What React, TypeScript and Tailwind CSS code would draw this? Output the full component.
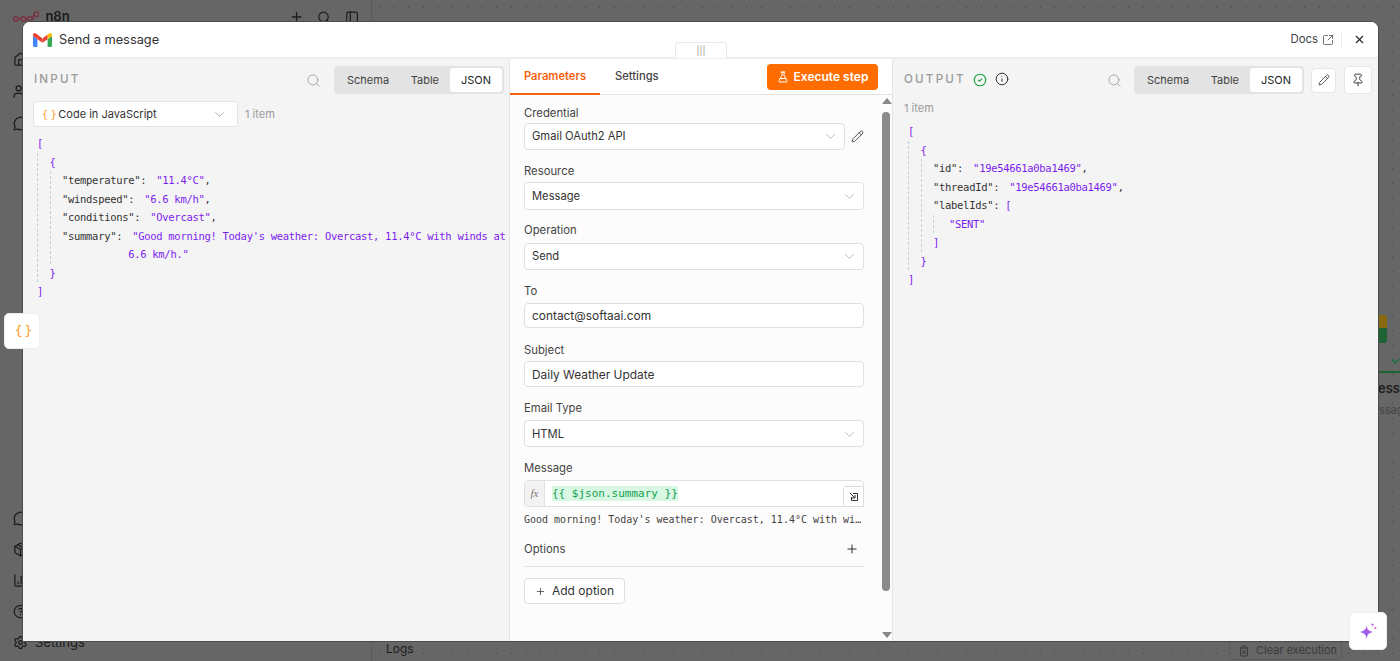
import React from "react";
import { Search, ChevronDown, Pencil, Pin, SquareArrowOutUpRight, X, Info, CircleCheck, FlaskConical, Plus, Home, Users, MessageCircle, PanelLeft, Settings, HelpCircle, BarChart3, Package, Trash2 } from "lucide-react";

const MONO = "font-['DejaVu_Sans_Mono',monospace]";

function Seg() {
  return (
    <div className="flex h-[28px] w-[170px] items-center rounded-[4px] bg-[#e3e3e3] p-[2px] text-[11px] text-[#444]">
      <span className="flex-1 pl-[11px]">Schema</span>
      <span className="mr-[11px]">Table</span>
      <span className="flex h-[24px] w-[52px] items-center justify-center rounded-[3px] bg-white text-[#222]">JSON</span>
    </div>
  );
}

function Gmail() {
  return (
    <svg width="19" height="14" viewBox="0 0 19 14">
      <path d="M0 3 L0 12.6 Q0 14 1.4 14 L4.4 14 L4.4 6.2Z" fill="#4285f4" />
      <path d="M14.6 6.2 L14.6 14 L17.6 14 Q19 14 19 12.6 L19 3Z" fill="#34a853" />
      <path d="M0 3 L0 1.8 Q0.4 -0.6 3 0.4 L9.5 5.4 L9.5 9.8 L4.4 6.2Z" fill="#ea4335" />
      <path d="M9.5 5.4 L14.6 1.4 L14.6 6.2 L9.5 9.8Z" fill="#ea4335" />
      <path d="M14.6 1.4 L16 0.4 Q18.6 -0.6 19 1.8 L19 3 L14.6 6.2Z" fill="#fbbc04" />
    </svg>
  );
}

function Braces({ className }: { className: string }) {
  return <span className={"font-['DejaVu_Sans_Mono',monospace] whitespace-pre text-[#ff9b26] " + className}>{"{ }"}</span>;
}

function Line({ children }: { children: React.ReactNode }) {
  return <div className="h-[18.5px] whitespace-pre leading-[18.5px]">{children}</div>;
}
const K = ({ children }: { children: React.ReactNode }) => <span className="text-[#333]">{children}</span>;
const V = ({ children }: { children: React.ReactNode }) => <span className="text-[#7c1df0]">{children}</span>;
const Gap = () => <span className="inline-block w-[10px]" />;

function Nest({ children }: { children: React.ReactNode }) {
  return <div className="border-l border-dashed border-[#c5cfdc] pl-[11.5px]">{children}</div>;
}

function Label({ children, className }: { children: React.ReactNode; className: string }) {
  return <div className={"text-[11.3px] leading-[16px] text-[#444] " + className}>{children}</div>;
}

function Box({ children, chevron = true, className = "" }: { children: React.ReactNode; chevron?: boolean; className?: string }) {
  return (
    <div className={"flex items-center justify-between rounded-[4px] border border-[#e0e0e0] bg-white pl-[7px] pr-[6px] text-[#333] " + className}>
      <span>{children}</span>
      {chevron && <ChevronDown size={15} strokeWidth={1.3} className="text-[#aaa]" />}
    </div>
  );
}

export default function App() {
  return (
    <div className="relative flex h-[661px] w-[1400px] overflow-hidden bg-[#666666] font-['Inter',sans-serif] text-[#1c1c1c]">
      {/* Dimmed app behind the dialog */}
      <aside className="flex h-full w-[372px] shrink-0 flex-col border-r border-[#5a5a5a] pr-[12px] pl-[13px] pt-[10px]">
        <div className="flex h-[14px] items-center">
          <svg width="28" height="12" viewBox="0 0 28 12" fill="none" stroke="#7b2d3f" strokeWidth="1.4">
            <circle cx="3" cy="8" r="2.4" /><circle cx="11" cy="8" r="2.4" /><circle cx="18" cy="8" r="2.4" /><circle cx="25" cy="3" r="2.4" />
            <path d="M5.4 8h3.2M13.4 8h2.2M20.4 8c2 0 .6-5 2.2-5" />
          </svg>
          <span className="ml-[6px] text-[13px] font-semibold">n8n</span>
          <Plus size={16} className="ml-[219px]" />
          <Search size={15} className="ml-[13px]" />
          <PanelLeft size={15} className="ml-[14px]" />
        </div>
        <div className="mt-[28px] flex flex-col gap-[17px]">
          <Home size={15} />
          <Users size={15} />
          <MessageCircle size={15} />
        </div>
        <div className="mt-auto flex flex-col gap-[16px] pb-[9px]">
          <MessageCircle size={15} />
          <Package size={15} />
          <BarChart3 size={15} />
          <HelpCircle size={15} className="-mb-[2px]" />
          <div className="flex items-center gap-[7px] text-[13px]">
            <Settings size={15} />
            <span>Settings</span>
          </div>
        </div>
      </aside>
      <main className="relative h-full flex-1 bg-[radial-gradient(circle,#3f3f3f_0.6px,transparent_0.8px)] bg-[size:14.7px_14.7px]">
        <span className="absolute bottom-[3px] left-[14px] text-[12px]">Logs</span>
        <div className="absolute right-[58px] bottom-[1px] flex h-[19px] w-[113px] items-center gap-[6px] rounded-[3px] border border-[#5c5c5c] pl-[8px] text-[11px] text-[#3a3a3a]">
          <Trash2 size={12} />
          Clear execution
        </div>
        <div className="absolute top-[315px] left-[1007px] h-[28px] w-[8px] rounded-r-[3px] bg-[linear-gradient(to_bottom,#8a6a10_45%,#1e6334_45%)]" />
        <svg width="9" height="7" viewBox="0 0 9 7" fill="none" stroke="#16703a" strokeWidth="1.4" className="absolute top-[358px] left-[1019px]">
          <path d="M0.5 1 L4 5 L8.5 1" />
        </svg>
        <div className="absolute top-[371px] left-[1007px] h-[1.5px] w-[21px] bg-[#1e6334]" />
        <span className="absolute top-[379px] left-[1006px] text-[13px] font-semibold">ess</span>
        <span className="absolute top-[402px] left-[1007px] text-[11px] text-[#444]">ssag</span>
      </main>

      {/* Dialog */}
      <div className="absolute top-[21px] left-[22px] flex h-[621px] w-[1357px] flex-col overflow-hidden rounded-t-[8px] border border-[#4c4c4c] bg-white">
        <header className="flex h-[37px] shrink-0 items-center border-b-2 border-[#eeeeee] bg-white pr-[12px] pl-[10px]">
          <Gmail />
          <span className="ml-[7px] text-[12.8px] text-[#333]">Send a message</span>
          <span className="ml-auto text-[11.4px] text-[#444]">Docs</span>
          <SquareArrowOutUpRight size={12} strokeWidth={1.5} className="ml-[4px] text-[#444]" />
          <span className="mr-[11px] ml-[7px] h-[14px] w-px bg-[#eaeaea]" />
          <X size={13} strokeWidth={2} className="text-[#222]" />
        </header>
        <div className="flex min-h-0 flex-1">
          {/* Input */}
          <section className="w-[487px] shrink-0 border-r border-[#e5e5e5] bg-[#f4f4f4] pl-[11px]">
            <div className="flex h-[42px] items-center pr-[5px]">
              <span className="text-[11.6px] font-medium tracking-[2.2px] text-[#9a9a9a]">INPUT</span>
              <Search size={15} strokeWidth={1.3} className="mr-[13px] ml-auto text-[#9a9a9a]" />
              <Seg />
            </div>
            <div className="-ml-px flex items-center">
              <div className="flex h-[26px] w-[205px] items-center rounded-[4px] border border-[#e4e4e4] bg-white pr-[10px] pl-[8px] text-[11px] text-[#333]">
                <Braces className="mr-[3px] text-[10px] tracking-[-1.6px]" />
                Code in JavaScript
                <ChevronDown size={15} strokeWidth={1.2} className="ml-auto text-[#999]" />
              </div>
              <span className="ml-[7px] text-[11px] text-[#9a9a9a]">1 item</span>
            </div>
            <div className={"mt-[7px] ml-[3px] text-[10.5px] tracking-[-0.3px] " + MONO}>
              <Line><V>[</V></Line>
              <Nest>
                <Line><V>{"{"}</V></Line>
                <Nest>
                  <Line><K>"temperature":</K><Gap /><V>"11.4°C"</V><K>,</K></Line>
                  <Line><K>"windspeed":</K><Gap /><V>"6.6 km/h"</V><K>,</K></Line>
                  <Line><K>"conditions":</K><Gap /><V>"Overcast"</V><K>,</K></Line>
                  <Line><K>"summary":</K><Gap /><V>"Good morning! Today's weather: Overcast, 11.4°C with winds at</V></Line>
                  <Line><V>{"           6.6 km/h.\""}</V></Line>
                </Nest>
                <Line><V>{"}"}</V></Line>
              </Nest>
              <Line><V>]</V></Line>
            </div>
          </section>

          {/* Parameters */}
          <section className="flex w-[383px] shrink-0 flex-col border-r border-[#e5e5e5] bg-[#fcfcfc]">
            <div className="flex h-[36px] shrink-0 items-stretch border-b border-[#e3e3e3] bg-white pr-[14px]">
              <span className="-mb-px flex w-[90px] items-center border-b-2 border-[#f4600c] pl-[14px] text-[11.2px] font-semibold text-[#f4600c]">Parameters</span>
              <span className="ml-[15px] flex items-center text-[11.2px] font-medium text-[#444]">Settings</span>
              <div className="mt-[5px] ml-auto flex h-[26px] w-[111px] items-center justify-center gap-[5px] rounded-[4px] bg-[#ff6d00] text-[12px] font-semibold text-white">
                <FlaskConical size={12} strokeWidth={2} />
                Execute step
              </div>
            </div>
            <div className="flex min-h-0 flex-1">
              <div className="flex-1 pr-[17px] pl-[14px]">
                <Label className="mt-[10px]">Credential</Label>
                <div className="mt-[2px] flex items-center">
                  <Box className="h-[27px] w-[321px] text-[11.2px]">Gmail OAuth2 API</Box>
                  <Pencil size={13} strokeWidth={1.5} className="ml-[6px] text-[#333]" />
                </div>
                <Label className="mt-[13px]">Resource</Label>
                <Box className="mt-[3px] h-[28px] pt-px text-[11.2px]">Message</Box>
                <Label className="mt-[12px]">Operation</Label>
                <Box className="mt-[5px] h-[27px] text-[11.2px]">Send</Box>
                <Label className="mt-[13px]">To</Label>
                <Box chevron={false} className="mt-[4px] h-[25px] pt-px text-[11.9px]">contact@softaai.com</Box>
                <Label className="mt-[14px]">Subject</Label>
                <Box chevron={false} className="mt-[3px] h-[26px] pt-px text-[11.9px]">Daily Weather Update</Box>
                <Label className="mt-[13px]">Email Type</Label>
                <Box className="mt-[4px] h-[27px] pt-px text-[11.2px]">HTML</Box>
                <Label className="mt-[13px]">Message</Label>
                <div className="relative mt-[4px] flex h-[27px] items-center rounded-[4px] border border-[#e0e0e0] bg-white">
                  <span className="flex h-full w-[20px] items-center justify-center rounded-l-[4px] border-r border-[#e0e0e0] bg-[#f2f2f2] font-['Liberation_Serif',serif] text-[11px] text-[#777] italic">fx</span>
                  <span className={"ml-[7px] bg-[#d9f8e4] text-[11px] leading-[15px] text-[#12a150] " + MONO}>{"{{ $json.summary }}"}</span>
                  <span className="absolute -right-px -bottom-px flex h-[21px] w-[21px] items-center justify-center rounded-tl-[3px] border border-[#dcdcdc] bg-white">
                    <svg width="10" height="10" viewBox="0 0 10 10" fill="none" stroke="#333" strokeWidth="1">
                      <path d="M4 1.5 H8.5 V8.5 H2.5 V5" />
                      <path d="M1 1 L6 6 M6 3 V6 H3" />
                    </svg>
                  </span>
                </div>
                <div className={"mt-[6px] text-[10px] leading-[13px] whitespace-pre text-[#444] " + MONO}>Good morning! Today's weather: Overcast, 11.4°C with wi…</div>
                <div className="mt-[15px] flex items-center justify-between border-b border-[#e3e3e3] pb-[9px]">
                  <span className="text-[11.3px] leading-[16px] text-[#444]">Options</span>
                  <Plus size={14} strokeWidth={1.6} className="mr-[5px] text-[#222]" />
                </div>
                <div className="mt-[11px] flex h-[26px] w-[101px] items-center justify-center gap-[6px] rounded-[4px] border border-[#dedede] bg-white text-[12px] text-[#333]">
                  <Plus size={11} strokeWidth={1.6} />
                  Add option
                </div>
              </div>
              <div className="relative w-[12px] shrink-0">
                <div className="absolute top-[3px] left-[1px] h-0 w-0 border-x-[5px] border-b-[6px] border-x-transparent border-b-[#888]" />
                <div className="mt-[17px] ml-[1px] h-[479px] w-[8px] rounded-[4px] bg-[#8a8a8a]" />
                <div className="absolute bottom-[3px] left-[1px] h-0 w-0 border-x-[5px] border-t-[6px] border-x-transparent border-t-[#888]" />
              </div>
            </div>
          </section>

          {/* Output */}
          <section className="min-w-0 flex-1 bg-[#f4f4f4] pl-[11px]">
            <div className="flex h-[42px] items-center pr-[6px]">
              <span className="text-[11.6px] font-medium tracking-[2.2px] text-[#9a9a9a]">OUTPUT</span>
              <CircleCheck size={14} strokeWidth={1.8} className="ml-[7px] text-[#0fa33b]" />
              <Info size={14} strokeWidth={1.7} className="-mt-[2px] ml-[8px] text-[#333]" />
              <Search size={15} strokeWidth={1.3} className="mr-[12px] ml-auto text-[#9a9a9a]" />
              <Seg />
              <div className="ml-[7px] flex h-[25px] w-[25px] items-center justify-center rounded-[4px] border border-[#e6e6e6] bg-white">
                <Pencil size={12} strokeWidth={1.6} className="text-[#333]" />
              </div>
              <div className="ml-[8px] flex h-[28px] w-[28px] items-center justify-center rounded-[4px] border border-[#e6e6e6] bg-white">
                <Pin size={14} strokeWidth={1.6} className="text-[#333]" />
              </div>
            </div>
            <div className="text-[11px] leading-[14px] text-[#9a9a9a]">1 item</div>
            <div className={"mt-[7px] ml-[4px] text-[10.5px] tracking-[-0.3px] " + MONO}>
              <Line><V>[</V></Line>
              <Nest>
                <Line><V>{"{"}</V></Line>
                <Nest>
                  <Line><K>"id":</K><Gap /><V>"19e54661a0ba1469"</V><K>,</K></Line>
                  <Line><K>"threadId":</K><Gap /><V>"19e54661a0ba1469"</V><K>,</K></Line>
                  <Line><K>"labelIds":</K> <V>[</V></Line>
                  <div className="border-l border-dashed border-[#c5cfdc] pl-[15px]">
                    <Line><V>"SENT"</V></Line>
                  </div>
                  <Line><V>]</V></Line>
                </Nest>
                <Line><V>{"}"}</V></Line>
              </Nest>
              <Line><V>]</V></Line>
            </div>
          </section>
        </div>
      </div>

      {/* Panel drag handle */}
      <div className="absolute top-[42px] left-[675px] flex h-[16px] w-[52px] items-center justify-center rounded-t-[4px] border border-b-0 border-[#e8e8e8] bg-white text-[9px] text-[#999]">|||</div>

      {/* Floating input tab */}
      <div className="absolute top-[313px] left-[4px] flex h-[36px] w-[36px] items-center justify-center rounded-[5px] border border-[#eeeeee] bg-white">
        <Braces className="text-[13px] tracking-[-3px]" />
      </div>

      {/* AI assistant */}
      <div className="absolute top-[612px] left-[1349px] flex h-[38px] w-[38px] items-center justify-center rounded-[5px] border border-[#eeeeee] bg-white">
        <svg width="18" height="18" viewBox="0 0 18 18">
          <defs>
            <linearGradient id="sp" x1="0" y1="1" x2="1" y2="0">
              <stop offset="0" stopColor="#7b61ff" />
              <stop offset="1" stopColor="#c95ad8" />
            </linearGradient>
          </defs>
          <path d="M7.5 3.5 C8.2 7.5 9.5 8.8 14 10 C9.5 11.2 8.2 12.5 7.5 17 C6.8 12.5 5.5 11.2 1 10 C5.5 8.8 6.8 7.5 7.5 3.5Z" fill="url(#sp)" />
          <path d="M13.5 0.5 C13.7 2 14 2.4 15.5 2.7 C14 3 13.7 3.4 13.5 5 C13.3 3.4 13 3 11.5 2.7 C13 2.4 13.3 2 13.5 0.5Z" fill="#b56be8" />
          <circle cx="16.3" cy="6" r="1.1" fill="#d85fc8" />
        </svg>
      </div>
    </div>
  );
}
